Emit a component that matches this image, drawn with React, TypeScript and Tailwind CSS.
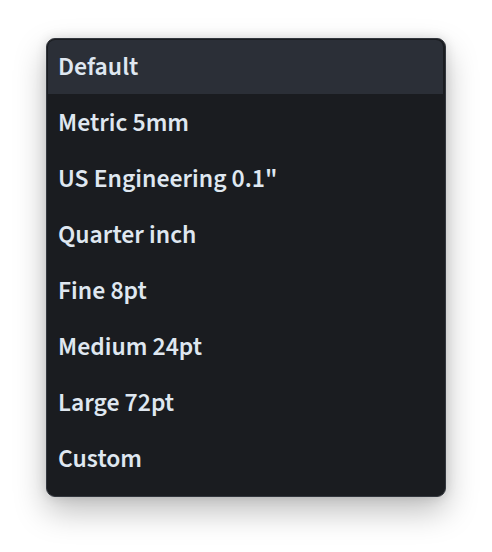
import React from "react";

const items = [
  "Default",
  "Metric 5mm",
  'US Engineering 0.1"',
  "Quarter inch",
  "Fine 8pt",
  "Medium 24pt",
  "Large 72pt",
  "Custom",
];

export default function App() {
  return (
    <div className="w-[492px] h-[552px] bg-white pt-[38px] pl-[46px]">
      <div className="w-[400px] h-[459px] rounded-[9px] border border-[#33373e] bg-[#1a1c20] shadow-[0_14px_32px_rgba(0,0,0,0.26),0_0_12px_rgba(0,0,0,0.12)] pt-[1px] pl-[1px] pr-[2px]">
        <div className="flex flex-col gap-[2px]">
          {items.map((t, i) => (
            <div
              key={t}
              className={`h-[54px] flex items-center pl-[10px] text-[25.7px] font-semibold text-[#dfe7f0] ${
                i === 0 ? "bg-[#2b2f37] rounded-t-[7px]" : ""
              }`}
              style={{ fontFamily: '"Source Sans 3", "Noto Sans", sans-serif' }}
            >
              {t}
            </div>
          ))}
        </div>
      </div>
    </div>
  );
}
